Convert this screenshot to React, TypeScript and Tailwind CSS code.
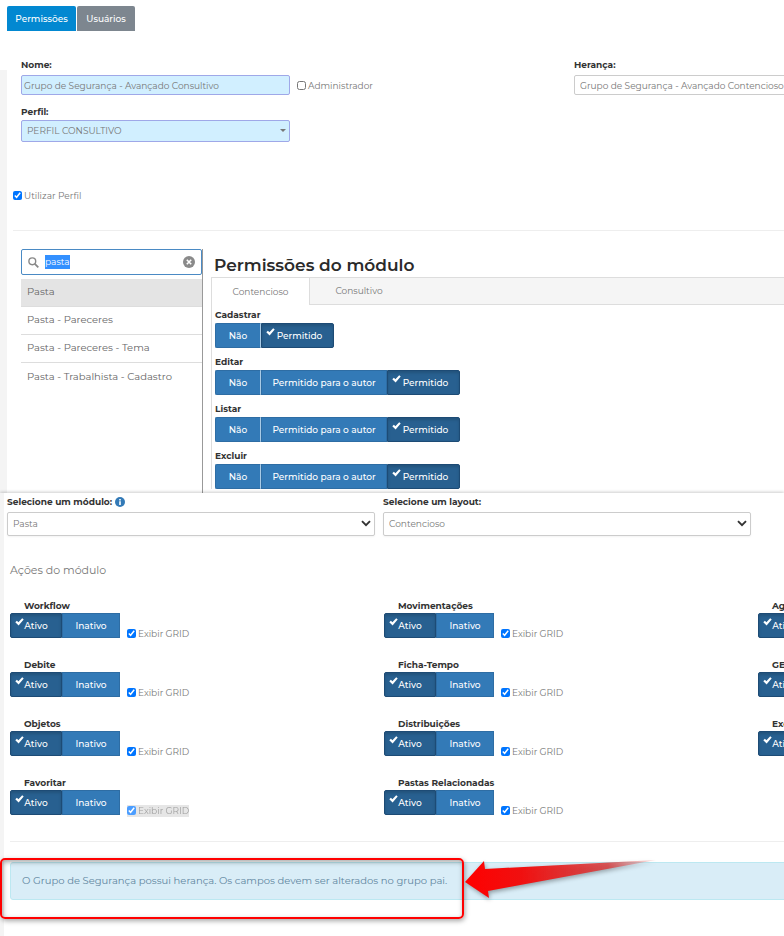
import { useEffect, useRef } from "react";

const permissions = [
  { name: "Cadastrar", options: ["Não", "Permitido"] },
  { name: "Editar", options: ["Não", "Permitido para o autor", "Permitido"] },
  { name: "Listar", options: ["Não", "Permitido para o autor", "Permitido"] },
  { name: "Excluir", options: ["Não", "Permitido para o autor", "Permitido"] },
];

const modules = ["Pasta", "Pasta - Pareceres", "Pasta - Pareceres - Tema", "Pasta - Trabalhista - Cadastro"];

const actions = [
  "Workflow",
  "Movimentações",
  "Agenda",
  "Debite",
  "Ficha-Tempo",
  "GED",
  "Objetos",
  "Distribuições",
  "Excluir",
  "Favoritar",
  "Pastas Relacionadas",
];

function Tick() {
  return (
    <svg viewBox="0 0 9 8" className="absolute top-1 left-1 h-2 w-[9px]" aria-hidden="true">
      <path d="M0.3 4.2 L1.9 2.7 L3.4 4.3 L7.2 0.2 L8.7 1.5 L3.6 7.6 Z" fill="#fff" />
    </svg>
  );
}

function Toggle({ label, active, width }: { label: string; active: boolean; width: string }) {
  return (
    <button
      type="button"
      aria-pressed={active}
      className={`relative h-[25px] border text-center text-[9px] font-medium text-white first:rounded-l-[2px] last:rounded-r-[2px] ${width} ${
        active
          ? "border-[#1d4b75] bg-[#286090] shadow-[inset_0_2px_3px_rgba(0,0,0,0.15)]"
          : "border-[#2e6da4] bg-[#337ab7]"
      }`}
    >
      {active && <Tick />}
      {label}
    </button>
  );
}

function permissionWidth(option: string) {
  if (option === "Não") return "w-[46px] border-r-[#a9cbe6]";
  if (option === "Permitido") return "w-[73px] pl-1";
  return "w-[126px]";
}

function Check({ id, label, checked, disabled }: { id: string; label: string; checked?: boolean; disabled?: boolean }) {
  return (
    <span className={`flex items-center gap-0.5 text-[9px] leading-3 text-[#777] ${disabled ? "bg-[#dcdcdc] opacity-70" : ""}`}>
      <input id={id} type="checkbox" defaultChecked={checked} className="mb-0.5 size-[9px] accent-[#0075ff]" />
      <label htmlFor={id}>{label}</label>
    </span>
  );
}

function LayoutSelect({ id, value }: { id: string; value: string }) {
  return (
    <div className="relative">
      <select
        id={id}
        className="block h-6 w-full appearance-none rounded-[2px] border border-[#ccc] bg-white px-[5px] text-[9px] text-[#777] shadow-xs outline-none"
      >
        <option>{value}</option>
      </select>
      <svg viewBox="0 0 10 7" className="pointer-events-none absolute top-2 right-1 h-[7px] w-[10px]" aria-hidden="true">
        <path d="M1 1.2 L5 5.2 L9 1.2" fill="none" stroke="#333" strokeWidth="1.9" />
      </svg>
    </div>
  );
}

export default function App() {
  const search = useRef<HTMLInputElement>(null);
  useEffect(() => {
    search.current?.focus();
    search.current?.select();
  }, []);

  return (
    <main className="overflow-hidden bg-white font-['Montserrat','Inter',sans-serif] text-[9px] text-[#777]">
      <nav className="flex h-[70px] gap-px pt-1.5 pl-[7px]">
        <button type="button" className="h-[25px] w-[69px] rounded-t-[2px] bg-[#0288d1] font-medium text-white">
          Permissões
        </button>
        <button type="button" className="h-[25px] w-[58px] rounded-t-[2px] bg-[#7d868f] font-medium text-white">
          Usuários
        </button>
      </nav>

      <section className="-mt-3 flex h-[435px] flex-col">
        <div className="flex min-h-0 flex-1">
          <div className="mt-3 w-[7px] shrink-0 bg-[#f4f4f4]" />
          <div className="min-w-0 flex-1 pl-1.5">
            <div className="flex pl-2">
              <div className="w-[269px] shrink-0">
                <label htmlFor="nome" className="block h-[17px] leading-[14px] font-bold text-[#333]">
                  Nome:
                </label>
                <input
                  id="nome"
                  defaultValue="Grupo de Segurança - Avançado Consultivo"
                  className="block h-5 w-full rounded-[2px] border border-[#9fa8e8] bg-[#d1efff] px-0.5 text-[9px] text-[#777] outline-none"
                />
                <label htmlFor="perfil" className="mt-[10px] block h-[15px] leading-[14px] font-bold text-[#333]">
                  Perfil:
                </label>
                <div className="relative">
                  <select
                    id="perfil"
                    className="block h-[22px] w-full appearance-none rounded-[2px] border border-[#9fa8e8] bg-[#d1efff] px-[5px] text-[9px] text-[#777] outline-none"
                  >
                    <option>PERFIL CONSULTIVO</option>
                  </select>
                  <svg viewBox="0 0 6 3" className="pointer-events-none absolute top-[9px] right-1 h-[3px] w-1.5" aria-hidden="true">
                    <path d="M0 0H6L3 3Z" fill="#777" />
                  </svg>
                </div>
              </div>
              <div className="mt-[22px] ml-[7px] w-[277px] shrink-0">
                <Check id="admin" label="Administrador" />
              </div>
              <div className="w-[269px] shrink-0">
                <label htmlFor="heranca" className="block h-[17px] leading-[14px] font-bold text-[#333]">
                  Herança:
                </label>
                <input
                  id="heranca"
                  defaultValue="Grupo de Segurança - Avançado Contencioso"
                  className="block h-5 w-full rounded-[2px] border border-[#ccc] bg-white px-[5px] text-[9px] text-[#777] outline-none"
                />
              </div>
            </div>

            <div className="mt-12">
              <Check id="utilizar" label="Utilizar Perfil" checked />
            </div>
            <hr className="mt-7 border-[#eee]" />

            <div className="mt-[18px] flex h-[244px] pl-2">
              <div className="w-[182px] shrink-0 border-r border-[#999]">
                <div className="flex h-[26px] items-center rounded-[2px] border border-[#4a8ac4] px-1.5">
                  <svg viewBox="0 0 11 11" className="size-[11px] shrink-0" fill="none" stroke="#888" aria-hidden="true">
                    <circle cx="4.3" cy="4.3" r="3.4" strokeWidth="1.4" />
                    <path d="M6.8 6.8 L10.3 10.3" strokeWidth="1.8" />
                  </svg>
                  <input
                    ref={search}
                    aria-label="Pesquisar módulo"
                    defaultValue="pasta"
                    className="ml-1.5 h-[14px] min-w-0 flex-1 text-[9px] leading-[14px] text-[#555] outline-none selection:bg-[#3390ff] selection:text-white"
                  />
                  <button type="button" aria-label="Limpar">
                    <svg viewBox="0 0 12 12" className="size-3" aria-hidden="true">
                      <circle cx="6" cy="6" r="6" fill="#8a8a8a" />
                      <path d="M3.8 3.8 L8.2 8.2 M8.2 3.8 L3.8 8.2" stroke="#fff" strokeWidth="1.6" />
                    </svg>
                  </button>
                </div>
                <ul className="mt-1 text-[10px] text-[#666]">
                  {modules.map((name) => (
                    <li
                      key={name}
                      className="flex h-7 items-center border-b border-[#ddd] px-1.5 pb-0.5 first:bg-[#e4e4e4] last:border-0"
                    >
                      {name}
                    </li>
                  ))}
                </ul>
              </div>

              <div className="ml-2 min-w-0 flex-1">
                <h1 className="h-7 pt-1 pl-[3px] text-[17px] leading-6 font-semibold text-[#2b2b2b]">Permissões do módulo</h1>
                <div className="border-t border-l border-[#ddd]">
                  <div className="flex h-[27px] text-[#777]">
                    <button type="button" className="w-[97px]">
                      Contencioso
                    </button>
                    <div className="flex-1 border-b border-l border-[#ddd] bg-[#f5f5f5]">
                      <button type="button" className="h-full w-[98px]">
                        Consultivo
                      </button>
                    </div>
                  </div>
                  <div className="flex flex-col gap-[7px] pt-[3px] pl-[3px]">
                    {permissions.map((permission) => (
                      <div key={permission.name}>
                        <h2 className="h-[15px] leading-[14px] font-bold text-[#333]">{permission.name}</h2>
                        <div className="flex">
                          {permission.options.map((option) => (
                            <Toggle
                              key={option}
                              label={option}
                              active={option === "Permitido"}
                              width={permissionWidth(option)}
                            />
                          ))}
                        </div>
                      </div>
                    ))}
                  </div>
                </div>
              </div>
            </div>
          </div>
        </div>
      </section>

      <section className="relative flex h-[443px] bg-white shadow-[0_-1px_3px_rgba(0,0,0,0.2)]">
        <div className="w-1 shrink-0 bg-[#f4f4f4]" />
        <div className="min-w-0 flex-1">
          <div className="grid grid-cols-2 gap-2 pt-0.5 pr-[33px] pl-[3px]">
            <div>
              <div className="flex h-[17px] gap-[3px]">
                <label htmlFor="modulo" className="leading-[14px] font-bold text-[#333]">
                  Selecione um módulo:
                </label>
                <svg viewBox="0 0 10 10" className="mt-0.5 size-[10px]" aria-hidden="true">
                  <circle cx="5" cy="5" r="5" fill="#337ab7" />
                  <path d="M5 2V3.4M5 4.2V8" stroke="#fff" strokeWidth="1.6" />
                </svg>
              </div>
              <LayoutSelect id="modulo" value="Pasta" />
            </div>
            <div>
              <label htmlFor="layout" className="block h-[17px] leading-[14px] font-bold text-[#333]">
                Selecione um layout:
              </label>
              <LayoutSelect id="layout" value="Contencioso" />
            </div>
          </div>

          <h2 className="mt-[26px] pl-1.5 text-[11px] leading-4">Ações do módulo</h2>

          <div className="mt-[21px] grid grid-cols-[repeat(3,374px)] pl-1.5">
            {actions.map((name) => (
              <div key={name} className="h-[59px]">
                <h3 className="h-[14px] pl-[14px] leading-[14px] font-bold text-[#333]">{name}</h3>
                <div className="flex items-end">
                  <Toggle label="Ativo" active width="w-[52px]" />
                  <Toggle label="Inativo" active={false} width="w-[58px]" />
                  <div className="-mb-0.5 ml-[7px]">
                    <Check id={`grid-${name}`} label="Exibir GRID" checked disabled={name === "Favoritar"} />
                  </div>
                </div>
              </div>
            ))}
          </div>

          <hr className="mt-[6px] ml-1.5 border-[#eee]" />
          <p
            role="alert"
            className="mt-5 -mr-1 ml-1.5 h-[38px] rounded-[3px] border border-[#bce8f1] bg-[#d9edf7] pl-[11px] text-[10px] leading-[36px] text-[#5f86a0]"
          >
            O Grupo de Segurança possui herança. Os campos devem ser alterados no grupo pai.
          </p>
        </div>

        {/* Callout around the inheritance notice */}
        <div className="pointer-events-none absolute top-[365px] left-0 h-[61px] w-[464px] rounded-[5px] border-2 border-[#f00] shadow-[1px_2px_5px_rgba(0,0,0,0.35),inset_1px_2px_5px_rgba(0,0,0,0.35)]" />
        <svg
          viewBox="0 0 200 50"
          className="pointer-events-none absolute top-[362px] left-[460px] h-[50px] w-[200px] drop-shadow-[1px_2px_2px_rgba(0,0,0,0.35)]"
          aria-hidden="true"
        >
          <defs>
            <linearGradient id="arrow" x1="0" x2="1" y1="0" y2="0">
              <stop offset="0" stopColor="#ff0000" />
              <stop offset="0.3" stopColor="#f01010" />
              <stop offset="0.75" stopColor="#d83c3c" stopOpacity="0.85" />
              <stop offset="1" stopColor="#e88080" stopOpacity="0.2" />
            </linearGradient>
          </defs>
          <path d="M5 27 L24 6 L25 14 L196 5 L28 36 L29 43 Z" fill="url(#arrow)" />
        </svg>
      </section>
    </main>
  );
}
